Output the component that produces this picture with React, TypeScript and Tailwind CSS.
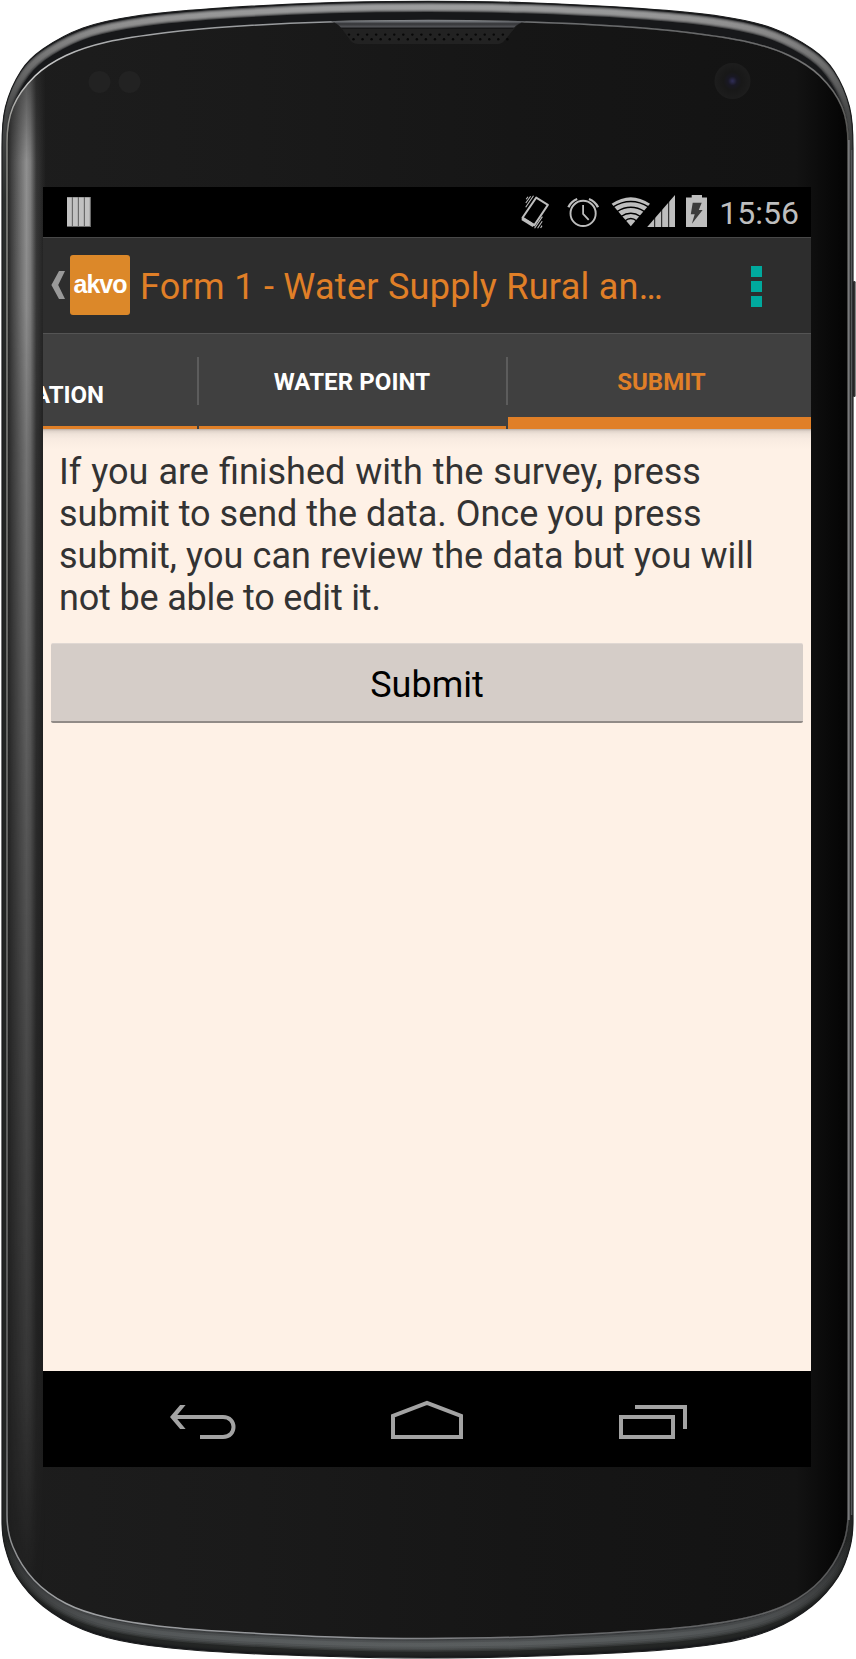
import React from "react";

type Point = [number, number];

const WIDTH = 855;

const OUTER_LEFT: Point[] = [
  [428, 1.3], [333, 2.6], [213, 8.6], [133, 16.5], [83, 28], [43, 49], [21, 71], [5.5, 107], [2, 148],
  [2, 1520], [5, 1547], [17, 1577], [43, 1606], [83, 1629.5], [133, 1643], [213, 1651.5], [333, 1656.5], [428, 1658],
];

const INNER_LEFT: Point[] = [
  [428, 20.5], [327, 22], [233, 26.5], [167, 32.5], [107, 42], [66, 55.5], [35, 76], [13, 107], [7, 143],
  [7, 1515], [13, 1547], [34, 1580], [66, 1603.5], [107, 1617.5], [167, 1627], [233, 1632], [333, 1637], [428, 1638.5],
];

function closeLoop(left: Point[]): Point[] {
  const right = left
    .slice(1, -1)
    .reverse()
    .map(([x, y]): Point => [WIDTH - x, y]);
  return [...left, ...right];
}

function blend(t: number): Point[] {
  return closeLoop(
    OUTER_LEFT.map(([x, y], i): Point => [
      x + (INNER_LEFT[i][0] - x) * t,
      y + (INNER_LEFT[i][1] - y) * t,
    ]),
  );
}

function smooth(points: Point[]): string {
  const n = points.length;
  let d = `M${points[0][0]} ${points[0][1]}`;
  for (let i = 0; i < n; i++) {
    const a = points[(i + n - 1) % n];
    const b = points[i];
    const c = points[(i + 1) % n];
    const e = points[(i + 2) % n];
    const len = Math.hypot(c[0] - b[0], c[1] - b[1]);
    const before = Math.hypot(b[0] - a[0], b[1] - a[1]);
    const after = Math.hypot(e[0] - c[0], e[1] - c[1]);
    const k1 = len / (before + len) / 3;
    const k2 = len / (after + len) / 3;
    const vert1 = before > 1000 || len > 1000;
    const vert2 = after > 1000 || len > 1000;
    const down = (Math.sign(c[1] - b[1]) * len) / 3;
    const t1: Point = vert1 ? [0, down] : [(c[0] - a[0]) * k1, (c[1] - a[1]) * k1];
    const t2: Point = vert2 ? [0, down] : [(e[0] - b[0]) * k2, (e[1] - b[1]) * k2];
    d += `C${b[0] + t1[0]} ${b[1] + t1[1]} ${c[0] - t2[0]} ${c[1] - t2[1]} ${c[0]} ${c[1]}`;
  }
  return d + "Z";
}

function PhoneBody() {
  const outer = smooth(blend(0));
  const inner = smooth(blend(1));
  const topBand = smooth(blend(0.31));
  const lowBand = smooth(blend(0.68));
  const dots: Point[] = [];
  for (let i = 0; i < 18; i++) {
    dots.push([349 + i * 9.05, 34.6]);
    dots.push([353.5 + i * 9.05, 39.2]);
  }
  return (
    <svg className="absolute inset-0" width="856" height="1659" viewBox="0 0 856 1659" fill="none">
      <defs>
        <linearGradient id="rim" x1="0" y1="0" x2="0" y2="400" gradientUnits="userSpaceOnUse">
          <stop offset="0" stopColor="#a6a7a8" />
          <stop offset="0.06" stopColor="#949494" />
          <stop offset="0.16" stopColor="#727272" />
          <stop offset="0.28" stopColor="#484949" />
          <stop offset="0.5" stopColor="#2c2f2e" />
          <stop offset="1" stopColor="#242625" />
        </linearGradient>
        <linearGradient id="lowRim" x1="0" y1="1540" x2="0" y2="1650" gradientUnits="userSpaceOnUse">
          <stop offset="0" stopColor="#3a3c3d" stopOpacity="0" />
          <stop offset="0.5" stopColor="#434546" />
          <stop offset="0.9" stopColor="#5b5f60" />
          <stop offset="1" stopColor="#606465" />
        </linearGradient>
        <linearGradient id="edge" x1="0" y1="0" x2="0" y2="1659" gradientUnits="userSpaceOnUse">
          <stop offset="0" stopColor="#85888c" />
          <stop offset="0.02" stopColor="#a0a2a4" />
          <stop offset="0.045" stopColor="#d0d0d0" />
          <stop offset="0.08" stopColor="#8b8b86" />
          <stop offset="0.85" stopColor="#6d6d6d" />
          <stop offset="0.97" stopColor="#a0a2a4" />
          <stop offset="1" stopColor="#8a8c90" />
        </linearGradient>
        <linearGradient id="edgeShade" x1="0" y1="0" x2="856" y2="0" gradientUnits="userSpaceOnUse">
          <stop offset="0.4" stopColor="#1a1a1a" stopOpacity="0" />
          <stop offset="0.65" stopColor="#1a1a1a" stopOpacity="0.35" />
          <stop offset="1" stopColor="#1a1a1a" stopOpacity="0.5" />
        </linearGradient>
        <linearGradient id="face" x1="0" y1="0" x2="856" y2="0" gradientUnits="userSpaceOnUse">
          <stop offset="0" stopColor="#1d1d1d" />
          <stop offset="0.3" stopColor="#1a1a1a" />
          <stop offset="0.6" stopColor="#161616" />
          <stop offset="0.93" stopColor="#131313" />
          <stop offset="0.985" stopColor="#050505" />
        </linearGradient>
        <linearGradient id="sheen" x1="7" y1="0" x2="46" y2="0" gradientUnits="userSpaceOnUse">
          <stop offset="0" stopColor="#9c9c9c" stopOpacity="0.02" />
          <stop offset="0.12" stopColor="#9c9c9c" stopOpacity="0.3" />
          <stop offset="0.35" stopColor="#9c9c9c" stopOpacity="0.7" />
          <stop offset="0.5" stopColor="#9c9c9c" stopOpacity="0.95" />
          <stop offset="0.6" stopColor="#9c9c9c" stopOpacity="0.8" />
          <stop offset="0.75" stopColor="#9c9c9c" stopOpacity="0.22" />
          <stop offset="1" stopColor="#9c9c9c" stopOpacity="0" />
        </linearGradient>
        <linearGradient id="fade" x1="0" y1="70" x2="0" y2="1600" gradientUnits="userSpaceOnUse">
          <stop offset="0" stopColor="#fff" stopOpacity="0.4" />
          <stop offset="0.06" stopColor="#fff" stopOpacity="0.95" />
          <stop offset="0.15" stopColor="#fff" stopOpacity="0.92" />
          <stop offset="0.25" stopColor="#fff" stopOpacity="0.72" />
          <stop offset="0.5" stopColor="#fff" stopOpacity="0.48" />
          <stop offset="0.85" stopColor="#fff" stopOpacity="0.22" />
          <stop offset="0.96" stopColor="#fff" stopOpacity="0.06" />
          <stop offset="1" stopColor="#fff" stopOpacity="0" />
        </linearGradient>
        <linearGradient id="earpiece" x1="0" y1="21" x2="0" y2="29" gradientUnits="userSpaceOnUse">
          <stop offset="0" stopColor="#7b7e83" />
          <stop offset="0.35" stopColor="#333437" />
          <stop offset="0.7" stopColor="#505155" />
          <stop offset="1" stopColor="#080808" />
        </linearGradient>
        <radialGradient id="lens">
          <stop offset="0" stopColor="#302e58" />
          <stop offset="0.25" stopColor="#191824" />
          <stop offset="0.5" stopColor="#181818" />
          <stop offset="1" stopColor="#1d1d1d" />
        </radialGradient>
        <mask id="sheenMask">
          <rect x="0" y="0" width="60" height="1659" fill="url(#fade)" />
        </mask>
        <clipPath id="faceClip">
          <path d={inner} />
        </clipPath>
        <clipPath id="bodyClip">
          <path d={outer} />
        </clipPath>
      </defs>

      <rect x="853" y="281" width="2.6" height="116" rx="1.3" fill="#333333" />
      <path d={outer} fill="#17181a" />
      <g clipPath="url(#bodyClip)">
        <path d={topBand} stroke="url(#rim)" strokeWidth="9.5" opacity="0.4" />
        <path d={topBand} stroke="url(#rim)" strokeWidth="7.5" opacity="0.5" />
        <path d={topBand} stroke="url(#rim)" strokeWidth="5.5" opacity="0.6" />
        <path d={topBand} stroke="url(#rim)" strokeWidth="3.5" opacity="0.7" />
        <path d={lowBand} stroke="url(#lowRim)" strokeWidth="14" opacity="0.3" />
        <path d={lowBand} stroke="url(#lowRim)" strokeWidth="11" opacity="0.4" />
        <path d={lowBand} stroke="url(#lowRim)" strokeWidth="8" opacity="0.5" />
        <path d={lowBand} stroke="url(#lowRim)" strokeWidth="4" opacity="0.7" />
      </g>
      <path d={outer} stroke="#1b1c1d" strokeWidth="1.2" />
      <path d={inner} fill="url(#face)" />
      <g clipPath="url(#faceClip)">
        <rect x="7" y="70" width="40" height="1540" fill="url(#sheen)" mask="url(#sheenMask)" />
      </g>
      <path d={inner} stroke="url(#edge)" strokeWidth="1.5" />
      <path d={inner} stroke="url(#edgeShade)" strokeWidth="2" />
      <path d="M848.8 140V1520" stroke="#77787a" strokeWidth="1.8" />
      <path d="M851.6 150V1515" stroke="#55585a" strokeWidth="1.4" />

      <path d="M331 21.5Q337 23 342 29L350 40Q353 44 358 44H498Q502 44 505 40L514 29Q518 23 526 21.5Z" fill="#222222" />
      <path d="M331 21.5Q337 22 342 29H513Q518 22 526 21.5L428 20Z" fill="url(#earpiece)" />
      {dots.map(([x, y], i) => (
        <circle key={i} cx={x} cy={y} r="1.2" fill="#070707" />
      ))}

      <circle cx="99.5" cy="82" r="11" fill="#222222" />
      <circle cx="129.5" cy="82" r="11" fill="#222222" />
      <circle cx="732.5" cy="81" r="18" fill="url(#lens)" />
    </svg>
  );
}

function BarsIcon() {
  return (
    <svg className="h-[30px] w-6" viewBox="0 0 24 30">
      {[0, 6, 12, 18].map((x) => (
        <g key={x}>
          <rect x={x} y="0" width="6" height="30" fill="#6b6b6b" />
          <rect x={x} y="0.4" width="4.8" height="28.6" fill="#c2c2c2" />
        </g>
      ))}
    </svg>
  );
}

function VibrateIcon() {
  return (
    <svg className="h-9 w-[30px]" viewBox="520 194 30 36" fill="none" stroke="#bebebe">
      <path d="M536.2 197.6L547.9 204.9L534.2 225.4L522.4 217.9Z" strokeWidth="1.9" strokeLinejoin="round" />
      <path d="M522.3 218.4L533.6 225.6" strokeWidth="3.6" />
      <path d="M525.7 207.3L533.5 195.8M525.8 203L530.6 196.2M526.2 199.3L528 196.7" strokeWidth="1.1" />
      <path d="M534.6 228.3L542.4 216.6M537.6 228.3L542.2 221.2M540.6 228L542 225.6" strokeWidth="1.1" />
    </svg>
  );
}

function AlarmIcon() {
  return (
    <svg className="h-9 w-8" viewBox="567 194 32 36" fill="none" stroke="#bebebe">
      <circle cx="583.1" cy="213.4" r="12.6" strokeWidth="1.9" />
      <path d="M583.1 205V213.8L588.7 219.8" strokeWidth="1.8" />
      <path d="M568.4 207.2A16.6 16.6 0 0 1 577.2 199M589 199A16.6 16.6 0 0 1 598 207.2" strokeWidth="2.4" />
    </svg>
  );
}

function SignalIcons() {
  return (
    <svg className="h-9 w-16" viewBox="611 194 64 36" fill="none">
      <path d="M630.8 226.2L611.6 203.8Q630.8 190.6 650 203.8Z" fill="#bebebe" />
      <path
        d="M612.8 207.2Q630.8 196 648.8 207.2M617 211.6Q630.8 203 644.6 211.6M621 216.5Q630.8 209.8 640.6 216.5M624.8 221Q630.8 216.2 636.8 221"
        stroke="#000"
        strokeWidth="1.5"
      />
      <path d="M647.2 227L675 195V227Z" fill="#bebebe" />
      <path d="M654.7 195V227M661.7 195V227M668.7 195V227" stroke="#000" strokeWidth="0.9" />
    </svg>
  );
}

function BatteryIcon() {
  return (
    <svg className="h-9 w-[21px]" viewBox="686 194 21 36">
      <path d="M686 197.5H691.7V195H702V197.5H707V227H686Z" fill="#bebebe" />
      <path d="M692.7 202.8H701.7L698.8 210H702.6L691.9 223.8L694.7 214.3H690.8Z" fill="#3b3b3b" />
    </svg>
  );
}

function StatusBar() {
  return (
    <div className="flex h-[50px] shrink-0 items-center bg-black pl-6 pr-[12px]">
      <BarsIcon />
      <div className="ml-auto flex items-center">
        <VibrateIcon />
        <div className="w-[17px]" />
        <AlarmIcon />
        <div className="w-3" />
        <SignalIcons />
        <div className="w-[11px]" />
        <BatteryIcon />
        <span className="ml-[12px] w-[80px] whitespace-nowrap pt-[2px] text-right text-[32px] leading-[48px] text-[#bebebe]">
          15:56
        </span>
      </div>
    </div>
  );
}

function ActionBar() {
  return (
    <header className="flex h-24 shrink-0 items-center border-t border-[#484848] bg-[#2d2d2d] pl-2 pr-[49px]">
      <svg className="mb-[2px] h-7 w-[14px]" viewBox="0 0 14 28">
        <path d="M8 0H14L7.2 14L14 28H8L0.4 14Z" fill="#999999" />
      </svg>
      <div className="mb-[2px] ml-[5px] flex h-[60px] w-[60px] items-center justify-center rounded-[3px] bg-[#dc8829]">
        <span className="font-['Liberation_Sans'] text-[25px] font-bold leading-none tracking-[-1px] text-white">
          akvo
        </span>
      </div>
      <h1 className="ml-[10px] whitespace-nowrap pt-[2px] text-[36px] leading-[42px] tracking-[0.28px] text-[#e07f27]">
        Form 1 - Water Supply Rural an…
      </h1>
      <div className="ml-auto flex flex-col gap-1 pt-[2px]">
        <i className="block h-[11px] w-[11px] bg-[#00a99d]" />
        <i className="block h-[11px] w-[11px] bg-[#00a99d]" />
        <i className="block h-[11px] w-[11px] bg-[#00a99d]" />
      </div>
    </header>
  );
}

function Tabs() {
  return (
    <nav className="flex h-24 shrink-0 border-t border-[#545454] bg-[#404040] text-2xl font-bold leading-7">
      <div className="flex w-[154px] items-center overflow-hidden border-b-[3px] border-[#e07f27] pt-[29px] text-white">
        <span className="-ml-[9px]">ATION</span>
      </div>
      <div className="w-[2px] pt-[23px]">
        <div className="h-12 bg-[#5c5c5c]" />
      </div>
      <div className="flex w-[307px] items-center justify-center border-b-[3px] border-[#e07f27] pr-[1px] pt-[3px] tracking-[0.1px] text-white">
        WATER POINT
      </div>
      <div className="w-[2px] pt-[23px]">
        <div className="h-12 bg-[#5c5c5c]" />
      </div>
      <div className="flex flex-1 items-center justify-center border-b-[12px] border-[#e07f27] pl-[4px] pt-[12px] text-[#e07f27]">
        SUBMIT
      </div>
    </nav>
  );
}

function NavBar() {
  return (
    <footer className="flex h-24 shrink-0 items-center bg-black">
      <svg className="h-24 w-full" viewBox="43 1371 768 96" fill="none" stroke="#a3a3a3" strokeWidth="4">
        <path d="M200 1437H223C237 1437 237 1417 223 1417H173" />
        <path d="M180.1 1405H185.6L175.6 1417L185.6 1429H180.1L170 1417Z" fill="#a3a3a3" stroke="none" />
        <path d="M393 1437V1415.8L427 1403L461 1415.8V1437Z" />
        <path d="M621 1417H673V1437H621ZM635 1407H685V1429" />
      </svg>
    </footer>
  );
}

export default function App() {
  return (
    <div className="relative h-[1659px] w-[856px] overflow-hidden bg-white pl-[43px] pt-[187px] font-[Roboto,sans-serif]">
      <PhoneBody />
      <div className="relative flex h-[1280px] w-[768px] flex-col overflow-hidden bg-[#fef1e6]">
        <StatusBar />
        <ActionBar />
        <Tabs />
        <main className="flex flex-1 flex-col bg-[linear-gradient(#b9aea5_0px,#dfd3ca_2px,#efe3d9_5px,#f8ebe1_10px,#fef1e6_20px)] px-2 pt-[22px]">
          <p className="whitespace-nowrap px-2 text-[36px] leading-[42px] text-[#333333]">
            <span className="block [word-spacing:1.05px]">If you are finished with the survey, press</span>
            <span className="block">submit to send the data. Once you press</span>
            <span className="block [word-spacing:0.35px]">submit, you can review the data but you will</span>
            <span className="block tracking-[-0.17px]">not be able to edit it.</span>
          </p>
          <button className="mt-6 h-20 rounded-[2px] border-b-2 border-t border-b-[#918b87] border-t-[#e0d8d3] bg-[#d5cdc8] pt-[5px] text-[36px] leading-[42px] text-black">
            Submit
          </button>
        </main>
        <NavBar />
      </div>
    </div>
  );
}
